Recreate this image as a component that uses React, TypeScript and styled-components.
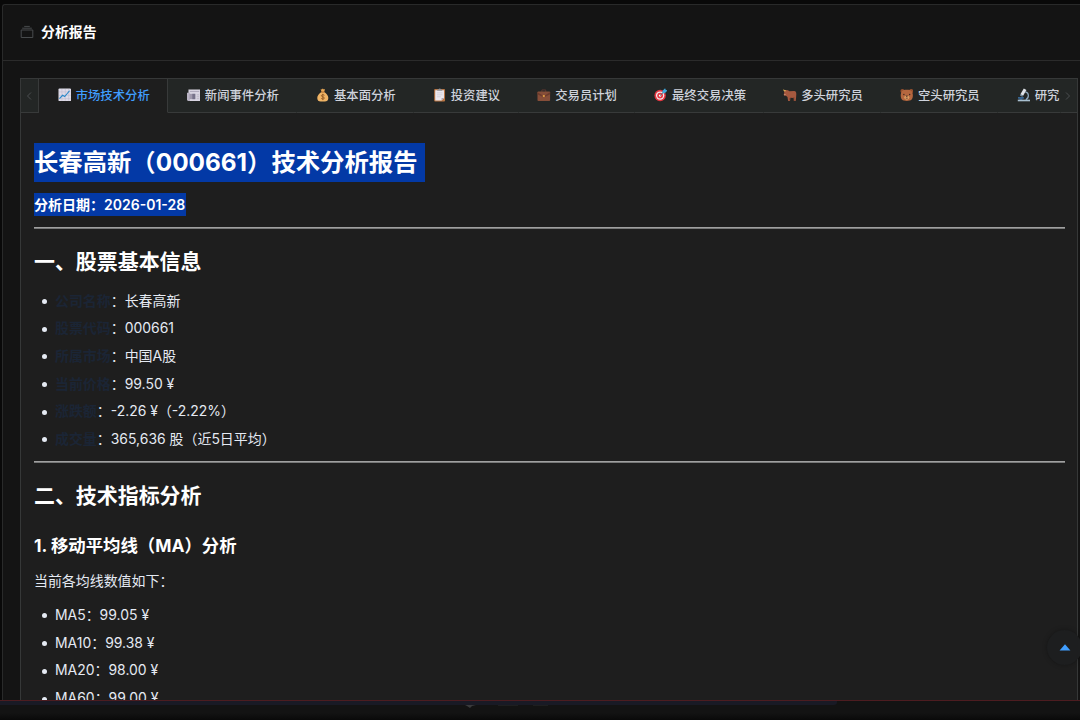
import type { FC, ReactNode } from "react";
import styled, { createGlobalStyle, css } from "styled-components";

interface TabItem {
  label: string;
  icon: ReactNode;
  active?: boolean;
}

interface Fact {
  label: string;
  value: string;
}

const GlobalStyle = createGlobalStyle`
  * {
    box-sizing: border-box;
  }
  body {
    margin: 0;
    background: #0a0a0a;
    font-family: Inter, "Noto Sans CJK SC", sans-serif;
  }
`;

const Page = styled.div`
  display: flex;
  flex-direction: column;
  height: 720px;
  padding: 4px 0 0 2px;
  overflow: hidden;
  background: #090909;
`;

const Card = styled.section`
  display: flex;
  flex: 1;
  flex-direction: column;
  min-height: 0;
  border: 1px solid #292a2a;
  border-right: none;
  border-bottom: none;
  border-radius: 3px 0 0 0;
  background: #141414;
`;

const CardHeader = styled.header`
  display: flex;
  flex: none;
  align-items: center;
  gap: 7px;
  height: 56px;
  padding: 0 0 2px 17px;
  border-bottom: 1px solid #2b2b2b;
`;

const CardTitle = styled.span`
  color: #fff;
  font-size: 13.9px;
  font-weight: 700;
  line-height: 20px;
`;

const CardBody = styled.div`
  display: flex;
  flex: 1;
  min-height: 0;
  padding: 17px 2px 0 17px;
`;

const Tabs = styled.div`
  display: flex;
  flex: 1;
  flex-direction: column;
  min-width: 0;
  border: 1px solid #363838;
  border-bottom: none;
  background: #1e1e1e;
`;

const TabHeader = styled.nav`
  display: flex;
  flex: none;
  height: 34px;
  background: #232625;
`;

const TabList = styled.div`
  display: flex;
  flex: 1;
  min-width: 0;
`;

const Arrow = styled.div<{ $left?: boolean }>`
  display: flex;
  flex: none;
  align-items: center;
  justify-content: center;
  width: ${({ $left }) => ($left ? 18 : 16)}px;
  padding: 1px 2px 0 0;
  border-bottom: 1px solid #383a3a;
  ${({ $left }) =>
    $left &&
    css`
      border-right: 1px solid #383a3a;
    `}
`;

const Tab = styled.div<{ $active?: boolean }>`
  display: flex;
  flex: none;
  align-items: center;
  gap: 4.6px;
  padding: 0 17.4px 1px 18.5px;
  border-right: 1px solid ${({ $active }) => ($active ? "#383a3a" : "transparent")};
  border-bottom: 1px solid ${({ $active }) => ($active ? "#1e1e1e" : "#383a3a")};
  background: ${({ $active }) => ($active ? "#1e1e1e" : "transparent")};
  color: ${({ $active }) => ($active ? "#409eff" : "#cfd3dc")};
  font-size: 12.35px;
  font-weight: 500;
  line-height: 21px;
  white-space: nowrap;

  &:last-child {
    flex: 1;
    padding-right: 0;
  }
`;

const Emoji = styled.svg`
  flex: none;
  width: 13.6px;
  height: 13.6px;
`;

const Report = styled.article`
  flex: 1;
  min-height: 0;
  padding: 30px 12px 0 13px;
  overflow: hidden;
  color: #e5eaf3;
  font-size: 13.95px;
`;

const Title = styled.h1`
  width: 391px;
  height: 39px;
  margin: 0;
  background: #0339a6;
  color: #fff;
  font-size: 24.35px;
  font-weight: 650;
  line-height: 39px;
  white-space: nowrap;
`;

const DateLine = styled.p`
  width: 151.5px;
  height: 23px;
  margin: 11px 0 0;
  background: #0339a6;
  color: #fff;
  font-size: 14px;
  font-weight: 600;
  line-height: 23px;
  white-space: nowrap;
`;

const Divider = styled.hr<{ $gap: number }>`
  height: 2px;
  margin: ${({ $gap }) => $gap}px 0 0;
  border: none;
  background: linear-gradient(#a0a0a0 50%, #777878 50%);
`;

const SectionTitle = styled.h2`
  margin: 18px 0 0;
  color: #fff;
  font-size: 20.95px;
  font-weight: 700;
  line-height: 30px;
`;

const SubTitle = styled.h3`
  margin: 22px 0 0;
  color: #fff;
  font-size: 17.4px;
  font-weight: 700;
  line-height: 25px;
`;

const Paragraph = styled.p`
  margin: 12px 0 0;
  line-height: 22px;
`;

const List = styled.ul<{ $gap: number }>`
  margin: ${({ $gap }) => $gap}px 0 0;
  padding: 0 0 0 21px;
  list-style: none;
`;

const Item = styled.li`
  display: flex;
  align-items: center;
  height: 27.7px;
  line-height: 27.7px;
  white-space: pre;

  &::before {
    content: "";
    width: 5px;
    height: 5px;
    margin: 2px 8px 0 -13px;
    border-radius: 50%;
    background: #e5eaf3;
  }
`;

const Muted = styled.strong`
  color: #1b2535;
  font-weight: 600;
`;

const BottomStrip = styled.footer`
  flex: none;
  height: 20px;
  margin-left: -2px;
  border-top: 1px solid #4d1c20;
  background: linear-gradient(#131313 12px, #090909);
`;

const Track = styled.div`
  width: 837px;
  height: 4px;
  border-radius: 0 0 3px 0;
  background: #191a25;
`;

const BackTop = styled.button`
  position: absolute;
  top: 630px;
  left: 1047px;
  display: flex;
  align-items: center;
  justify-content: center;
  width: 35px;
  height: 35px;
  padding: 0;
  border: none;
  border-radius: 50%;
  background: #1d1e1f;
  box-shadow: 0 0 5px rgba(0, 0, 0, 0.3);
`;

const Viewport = styled.div`
  position: relative;
  width: 1080px;
  height: 720px;
  overflow: hidden;
`;

const tabs: TabItem[] = [
  {
    label: "市场技术分析",
    active: true,
    icon: (
      <>
        <rect x="0.5" y="0.5" width="13" height="13" rx="1" fill="#dedbe8" />
        <path d="M1 4h12M1 7.5h12M1 11h12M4 1v12M7.5 1v12M11 1v12" stroke="#b9b4ca" strokeWidth=".5" />
        <path d="m1.5 11 3.2-3.5 2.2 1.3 5-6" fill="none" stroke="#2787c9" strokeWidth="1.1" />
      </>
    ),
  },
  {
    label: "新闻事件分析",
    icon: (
      <>
        <path d="M1.5 1.5H13a1 1 0 0 1 1 1v11H1.5z" fill="#d9d5e2" />
        <path d="M0 5h3v8.5H1.3L0 12.5z" fill="#b9b4c4" />
        <path d="M3 3.6h9.5" stroke="#aaa5b8" strokeWidth=".9" />
        <path d="M10 7h2.5M10 9h2.5M10 11h2.5" stroke="#b0abba" strokeWidth=".7" />
        <path d="M2.5 6h6v5.5h-6z" fill="#a09aad" />
        <path d="M5.5 6h3v5.5h-3z" fill="#77738a" />
      </>
    ),
  },
  {
    label: "基本面分析",
    icon: (
      <>
        <path d="m4.8 1 1.2.5L7 .4l1.1 1.1L9.3 1l-.9 3H5.7z" fill="#e8a856" />
        <path d="M5.5 4h3c2.3 1.6 4.2 3.8 4.2 6.2 0 2.5-1.5 3.6-3.6 3.6H4.9c-2.2 0-3.6-1.1-3.6-3.6 0-2.4 1.9-4.6 4.2-6.2z" fill="#f0b465" />
        <path d="M5.2 4.2h3.6" stroke="#a56227" strokeWidth=".9" />
        <path d="M8.7 7.5C7.8 6.7 5.5 6.7 5.5 8s3.2 1 3.2 2.3-2.3 1.4-3.4.4M7 6v6.5" fill="none" stroke="#874f1c" strokeWidth=".8" />
      </>
    ),
  },
  {
    label: "投资建议",
    icon: (
      <>
        <rect x="1.2" y="1" width="11.2" height="12.8" rx="1" fill="#b97543" />
        <path d="M2.3 2.3h9v8l-2.5 2.5H2.3z" fill="#ece8ef" />
        <path d="M11.3 10.2H8.8v2.6z" fill="#aaa5b3" />
        <path d="M4.3 2.9V1.5h1.4C6 .2 8 .2 8.2 1.5h1.3v1.4z" fill="#8c929b" />
        <path d="M4 5h5.8M4 7h5.8M4 9h4" stroke="#c9c5d2" strokeWidth=".7" />
      </>
    ),
  },
  {
    label: "交易员计划",
    icon: (
      <>
        <path d="M5 4V2h4v2" fill="none" stroke="#5d3830" strokeWidth="1" />
        <rect x=".5" y="3.5" width="13" height="9.8" rx=".8" fill="#864e39" />
        <path d="M.5 4.5 7 8.2l6.5-3.7v2L7 9.7.5 6.5z" fill="#6c3b2c" />
        <path d="M6 7.2h2v2.2H6z" fill="#d99745" />
      </>
    ),
  },
  {
    label: "最终交易决策",
    icon: (
      <>
        <circle cx="6.3" cy="7.8" r="5.9" fill="#e53741" />
        <circle cx="6.3" cy="7.8" r="4.3" fill="#f3e8ed" />
        <circle cx="6.3" cy="7.8" r="3" fill="#e53741" />
        <circle cx="6.3" cy="7.8" r="1.2" fill="#fff" />
        <path d="m6.3 7.8 5-5" stroke="#4c6878" />
        <path d="m8.6 3.2 2.8-2.9.6 1.6 1.9.7-2.8 2.8-2.4-.1z" fill="#40a9dc" />
      </>
    ),
  },
  {
    label: "多头研究员",
    icon: (
      <>
        <path d="M1 2.6 3.2 2l1.9.3 1.5 1 4.8-.1c1.7.1 2.3 1.2 2.3 3l-.2 3.2-.4 4.1h-1.6l-.5-3.3-3.4-.2-.4 3.5H5.3l-.7-4.3L3 7.9l-1.3.2-.9-.8.5-3z" fill="#a6593f" />
        <path d="M2.4 3.6C.7 3.8 0 2.7.7 1.1c.3 1 1.1 1.1 2.4 1.3" fill="#d9ab55" />
        <path d="M7 10.3v2.5M11.2 9.3v4" stroke="#743e2d" strokeWidth=".7" />
        <path d="m.8 6.4 1.7-.2.3.8-1 .8z" fill="#cf957b" />
      </>
    ),
  },
  {
    label: "空头研究员",
    icon: (
      <>
        <circle cx="2.5" cy="3.2" r="2.1" fill="#98512f" />
        <circle cx="11.5" cy="3.2" r="2.1" fill="#98512f" />
        <path d="M2 3.3C4 1.4 10 1.4 12 3.3c1.5 2 1.8 6.5 0 8.6-2 2-8 2-10 0-1.8-2.1-1.5-6.6 0-8.6z" fill="#b5673f" />
        <ellipse cx="7" cy="9.8" rx="2.7" ry="2.2" fill="#dc9c61" />
        <path d="M6 8h2L7 9zM7 9v.8m-1.2.5c.6.5 1.8.5 2.4 0" fill="#442c25" stroke="#442c25" strokeWidth=".4" />
        <circle cx="4" cy="6.7" r=".7" fill="#35251e" />
        <circle cx="10" cy="6.7" r=".7" fill="#35251e" />
      </>
    ),
  },
  {
    label: "研究",
    icon: (
      <>
        <path d="M8.5 4c4 .8 4.4 5.9.6 8.2" fill="none" stroke="#8ca7bc" strokeWidth="1.3" />
        <path d="M7 .5 9.7 2 6.3 8 3.5 6.4z" fill="#e0e3e9" />
        <path d="m3.5 6.4 2.8 1.6-.8 1.1-2.5-1.4z" fill="#7993a9" />
        <path d="M1 9.6h6v1.2H1z" fill="#3f82c6" />
        <path d="M2.5 10.8h3V12h-3z" fill="#356ca7" />
        <path d="M.8 12h12.6v1.7H.8z" fill="#a8bfd0" />
      </>
    ),
  },
];

const facts: Fact[] = [
  { label: "公司名称", value: "长春高新" },
  { label: "股票代码", value: "000661" },
  { label: "所属市场", value: "中国A股" },
  { label: "当前价格", value: "99.50 ¥" },
  { label: "涨跌额", value: "-2.26 ¥（-2.22%）" },
  { label: "成交量", value: "365,636 股（近5日平均）" },
];

const averages = [
  "MA5：99.05 ¥",
  "MA10：99.38 ¥",
  "MA20：98.00 ¥",
  "MA60：99.00 ¥",
];

const App: FC = () => {
  return (
    <Viewport>
      <GlobalStyle />
      <Page>
        <Card>
          <CardHeader>
            <svg width="14" height="14" viewBox="0 0 14 14" fill="none" stroke="#484b4d">
              <path d="M1.2 5h11.6v7.5H1.2zM2.2 3.2h9.6M4.2 1.4h5.6" />
            </svg>
            <CardTitle>分析报告</CardTitle>
          </CardHeader>
          <CardBody>
            <Tabs>
              <TabHeader>
                <Arrow $left>
                  <svg width="6" height="10" viewBox="0 0 6 10" fill="none" stroke="#4b4e50">
                    <path d="M5 1.5 1.5 5 5 8.5" />
                  </svg>
                </Arrow>
                <TabList>
                  {tabs.map(({ label, icon, active }) => (
                    <Tab key={label} $active={active}>
                      <Emoji viewBox="0 0 14 14">{icon}</Emoji>
                      {label}
                    </Tab>
                  ))}
                </TabList>
                <Arrow>
                  <svg width="6" height="10" viewBox="0 0 6 10" fill="none" stroke="#4b4e50">
                    <path d="M1 1.5 4.5 5 1 8.5" />
                  </svg>
                </Arrow>
              </TabHeader>
              <Report>
                <Title>长春高新（000661）技术分析报告</Title>
                <DateLine>分析日期：2026-01-28</DateLine>
                <Divider $gap={11} />
                <SectionTitle>一、股票基本信息</SectionTitle>
                <List $gap={9.5}>
                  {facts.map(({ label, value }) => (
                    <Item key={label}>
                      <Muted>{label}</Muted>：{value}
                    </Item>
                  ))}
                </List>
                <Divider $gap={8.3} />
                <SectionTitle>二、技术指标分析</SectionTitle>
                <SubTitle>1. 移动平均线（MA）分析</SubTitle>
                <Paragraph>当前各均线数值如下：</Paragraph>
                <List $gap={9.2}>
                  {averages.map((average) => (
                    <Item key={average}>{average}</Item>
                  ))}
                </List>
              </Report>
            </Tabs>
          </CardBody>
        </Card>
        <BottomStrip>
          <Track />
          <svg width="560" height="4" viewBox="0 0 560 4" display="block">
            <path d="M465 0h11l-4 1-2 2-3-2z" fill="#3a3b3c" />
            <path d="M498 .2h20M533 .2h15" stroke="#252627" />
          </svg>
        </BottomStrip>
      </Page>
      <BackTop aria-label="回到顶部">
        <svg width="12" height="7" viewBox="0 0 12 7">
          <path d="M6 .3 11.4 6.5H.6z" fill="#409eff" />
        </svg>
      </BackTop>
    </Viewport>
  );
};

export default App;
